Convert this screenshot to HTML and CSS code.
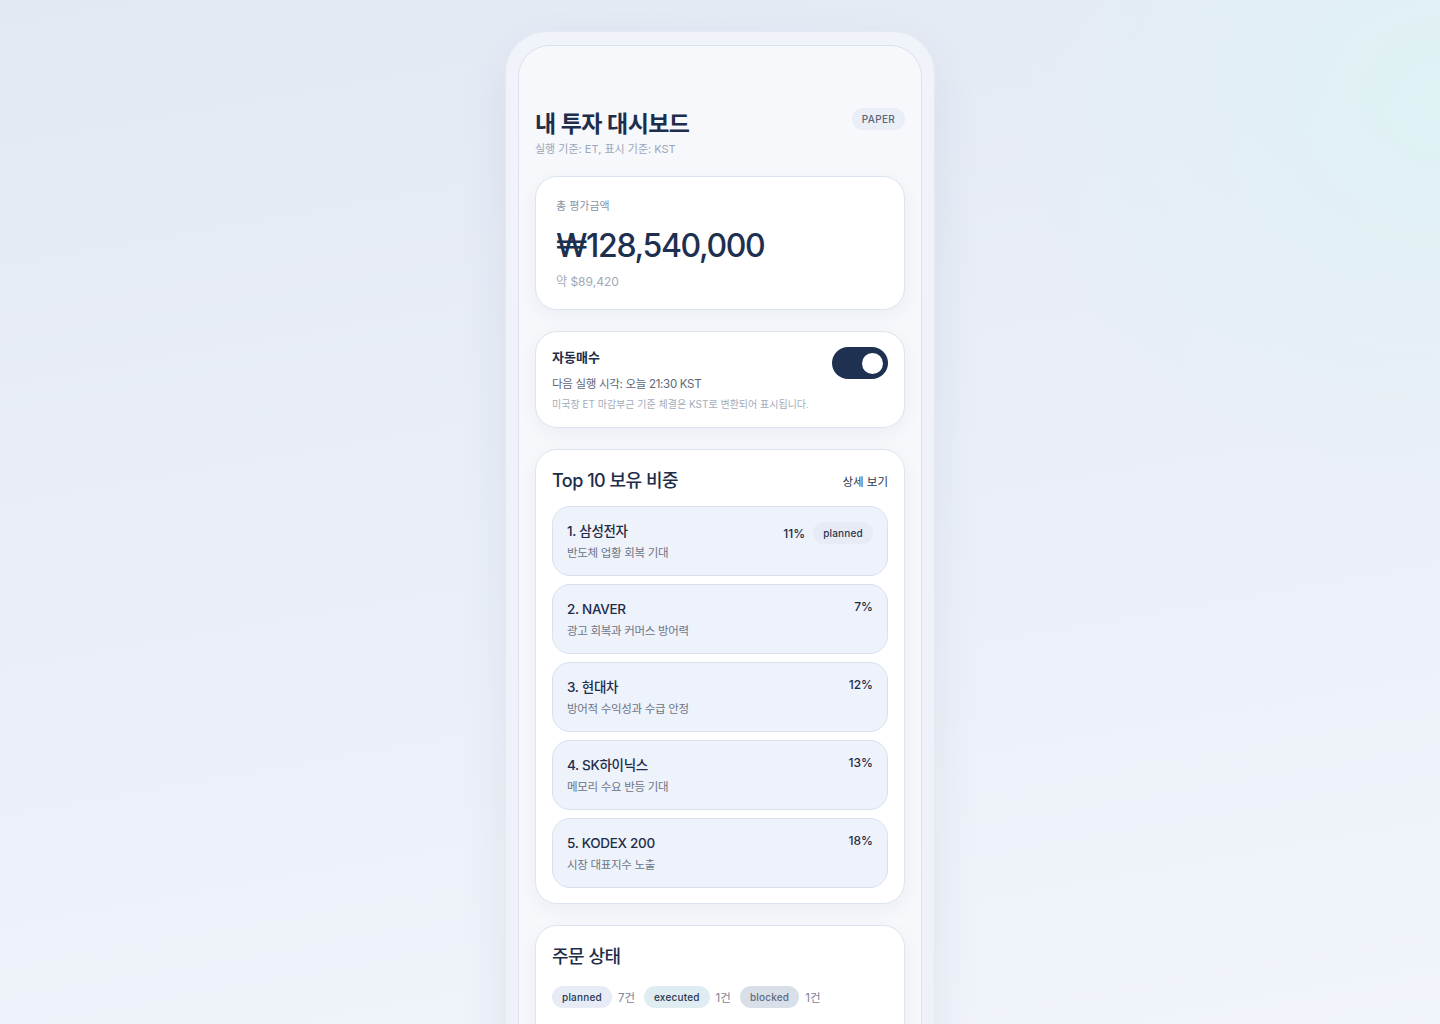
FILE: index.html
```html
<!DOCTYPE html>
<html lang="ko">
<head>
<meta charset="utf-8">
<title>내 투자 대시보드</title>
<link rel="stylesheet" href="styles.css">
</head>
<body>
<div class="stage">
  <div class="device">
    <div class="screen">
      <header class="head">
        <div>
          <h1 class="title">내 투자 대시보드</h1>
          <p class="subtitle">실행 기준: ET, 표시 기준: KST</p>
        </div>
        <span class="badge-paper">PAPER</span>
      </header>

      <section class="card total">
        <div class="total-label">총 평가금액</div>
        <div class="total-value">₩128,540,000</div>
        <div class="total-usd">약 $89,420</div>
      </section>

      <section class="card auto">
        <div class="auto-text">
          <div class="auto-title">자동매수</div>
          <div class="auto-next">다음 실행 시각: 오늘 21:30 KST</div>
          <div class="auto-note">미국장 ET 마감부근 기준 체결은 KST로 변환되어 표시됩니다.</div>
        </div>
        <div class="toggle"><span class="knob"></span></div>
      </section>

      <section class="card holdings">
        <div class="card-head">
          <h2 class="card-title">Top 10 보유 비중</h2>
          <span class="more">상세 보기</span>
        </div>
        <ul class="list">
          <li class="item">
            <div class="item-main">
              <div class="item-name">1. 삼성전자</div>
              <div class="item-desc">반도체 업황 회복 기대</div>
            </div>
            <div class="item-side with-badge"><span class="pct">11%</span><span class="chip chip-planned">planned</span></div>
          </li>
          <li class="item">
            <div class="item-main">
              <div class="item-name">2. NAVER</div>
              <div class="item-desc">광고 회복과 커머스 방어력</div>
            </div>
            <div class="item-side"><span class="pct">7%</span></div>
          </li>
          <li class="item">
            <div class="item-main">
              <div class="item-name">3. 현대차</div>
              <div class="item-desc">방어적 수익성과 수급 안정</div>
            </div>
            <div class="item-side"><span class="pct">12%</span></div>
          </li>
          <li class="item">
            <div class="item-main">
              <div class="item-name">4. SK하이닉스</div>
              <div class="item-desc">메모리 수요 반등 기대</div>
            </div>
            <div class="item-side"><span class="pct">13%</span></div>
          </li>
          <li class="item">
            <div class="item-main">
              <div class="item-name">5. KODEX 200</div>
              <div class="item-desc">시장 대표지수 노출</div>
            </div>
            <div class="item-side"><span class="pct">18%</span></div>
          </li>
        </ul>
      </section>

      <section class="card orders">
        <h2 class="card-title">주문 상태</h2>
        <div class="status-row">
          <span class="chip chip-planned">planned</span><span class="count">7건</span>
          <span class="chip chip-executed">executed</span><span class="count">1건</span>
          <span class="chip chip-blocked">blocked</span><span class="count">1건</span>
        </div>
      </section>
    </div>
  </div>
</div>
</body>
</html>
```

FILE: styles.css
```css
* { box-sizing: border-box; }

html, body {
  margin: 0;
  padding: 0;
}

body {
  font-family: "Inter", "Noto Sans CJK KR", sans-serif;
  color: #1e2d4a;
  min-height: 1024px;
  background:
    radial-gradient(ellipse 420px 380px at 100% 10%, rgba(222, 242, 244, 0.95), rgba(222, 242, 244, 0) 100%),
    linear-gradient(170deg, #e3e9f3 0%, #e9eef7 45%, #f1f4fb 100%);
  background-attachment: fixed;
}

.stage {
  display: flex;
  justify-content: center;
  padding-top: 31px;
}

.device {
  width: 430px;
  padding: 13px 12px 0 12px;
  border-radius: 42px 42px 0 0;
  background: linear-gradient(180deg, #f0f3f9 0%, #eef2f8 100%);
  border: 1px solid #e4e9f2;
  box-shadow: 0 20px 50px rgba(40, 60, 100, 0.08);
}

.screen {
  background: #f6f8fc;
  border: 1px solid #d9e2f0;
  border-radius: 32px 32px 0 0;
  padding: 64px 16px 40px 16px;
  display: flex;
  flex-direction: column;
  gap: 21px;
  min-height: 1100px;
}

.head {
  display: flex;
  justify-content: space-between;
  align-items: flex-start;
}

.title {
  margin: 0;
  font-size: 23px;
  font-weight: 600;
  line-height: 28px;
  letter-spacing: -0.6px;
  color: #1e2d4a;
}

.subtitle {
  margin: 5px 0 0 0;
  font-size: 11px;
  line-height: 12px;
  color: #9ca6b8;
  letter-spacing: 0;
}

.badge-paper {
  margin-top: -2px;
  height: 22px;
  padding: 0 10px;
  border-radius: 11px;
  background: #eaeef7;
  color: #5b6679;
  font-size: 10px;
  font-weight: 500;
  letter-spacing: 0.3px;
  display: inline-flex;
  align-items: center;
}

.card {
  background: #ffffff;
  border: 1px solid #dde4f0;
  border-radius: 22px;
  box-shadow: 0 6px 20px rgba(30, 48, 80, 0.05);
}

.total {
  padding: 21px 20px 20px 20px;
  height: 134px;
}

.total-label {
  font-size: 11px;
  line-height: 16px;
  color: #8a94a6;
}

.total-value {
  margin-top: 12px;
  font-size: 32px;
  font-weight: 500;
  line-height: 40px;
  letter-spacing: -1.35px;
  color: #1e3050;
}

.total-usd {
  margin-top: 8px;
  font-size: 12px;
  line-height: 16px;
  color: #a0a9b8;
}

.auto {
  padding: 16px 16px 16px 16px;
  display: flex;
  justify-content: space-between;
  align-items: flex-start;
}

.auto-title {
  font-size: 13px;
  font-weight: 600;
  line-height: 18px;
  color: #1e2d4a;
}

.auto-next {
  margin-top: 10px;
  font-size: 11.5px;
  line-height: 16px;
  color: #5d6779;
  letter-spacing: -0.3px;
}

.auto-note {
  margin-top: 5px;
  font-size: 10px;
  line-height: 14px;
  color: #a3acbb;
  letter-spacing: 0;
}

.toggle {
  margin-top: -1px;
  width: 56px;
  height: 32px;
  border-radius: 16px;
  background: #1f3150;
  display: flex;
  align-items: center;
  justify-content: flex-end;
  padding-right: 5px;
}

.knob {
  width: 21px;
  height: 21px;
  border-radius: 50%;
  background: #ffffff;
}

.holdings {
  padding: 18px 16px 15px 16px;
}

.card-head {
  display: flex;
  justify-content: space-between;
  align-items: center;
  margin-bottom: 12px;
}

.card-title {
  margin: 0;
  font-size: 18px;
  font-weight: 500;
  line-height: 26px;
  letter-spacing: -0.5px;
  color: #1e2d4a;
}

.more {
  font-size: 11.5px;
  color: #2a3650;
}

.list {
  list-style: none;
  margin: 0;
  padding: 0;
  display: flex;
  flex-direction: column;
  gap: 8px;
}

.item {
  height: 70px;
  background: #eef2fa;
  border: 1px solid #d9e1ee;
  border-radius: 18px;
  padding: 14px 14px 0 14px;
  display: flex;
  justify-content: space-between;
  align-items: flex-start;
}

.item-name {
  font-size: 13.5px;
  font-weight: 500;
  line-height: 20px;
  letter-spacing: -0.3px;
  color: #1e2d4a;
}

.item-desc {
  margin-top: 4px;
  font-size: 11.5px;
  line-height: 17px;
  color: #6b7587;
  letter-spacing: -0.3px;
}

.item-side {
  display: flex;
  align-items: center;
  gap: 8px;
  margin-top: 0;
}

.item-side.with-badge {
  margin-top: 1px;
}

.pct {
  font-size: 12px;
  font-weight: 500;
  color: #1e2d4a;
}

.chip {
  height: 22px;
  padding: 0 10px;
  border-radius: 11px;
  font-size: 10px;
  font-weight: 450;
  display: inline-flex;
  align-items: center;
  color: #2a3650;
  letter-spacing: 0.2px;
}

.chip-planned { background: #e6ebf5; }
.chip-executed { background: #dfecf1; }
.chip-blocked { background: #d9dfe9; color: #5f6a7e; }

.orders {
  padding: 18px 16px 16px 16px;
  min-height: 120px;
}

.status-row {
  margin-top: 16px;
  display: flex;
  align-items: center;
}

.count {
  font-size: 11.5px;
  color: #7a8496;
  margin: 0 9px 0 6px;
}
```
